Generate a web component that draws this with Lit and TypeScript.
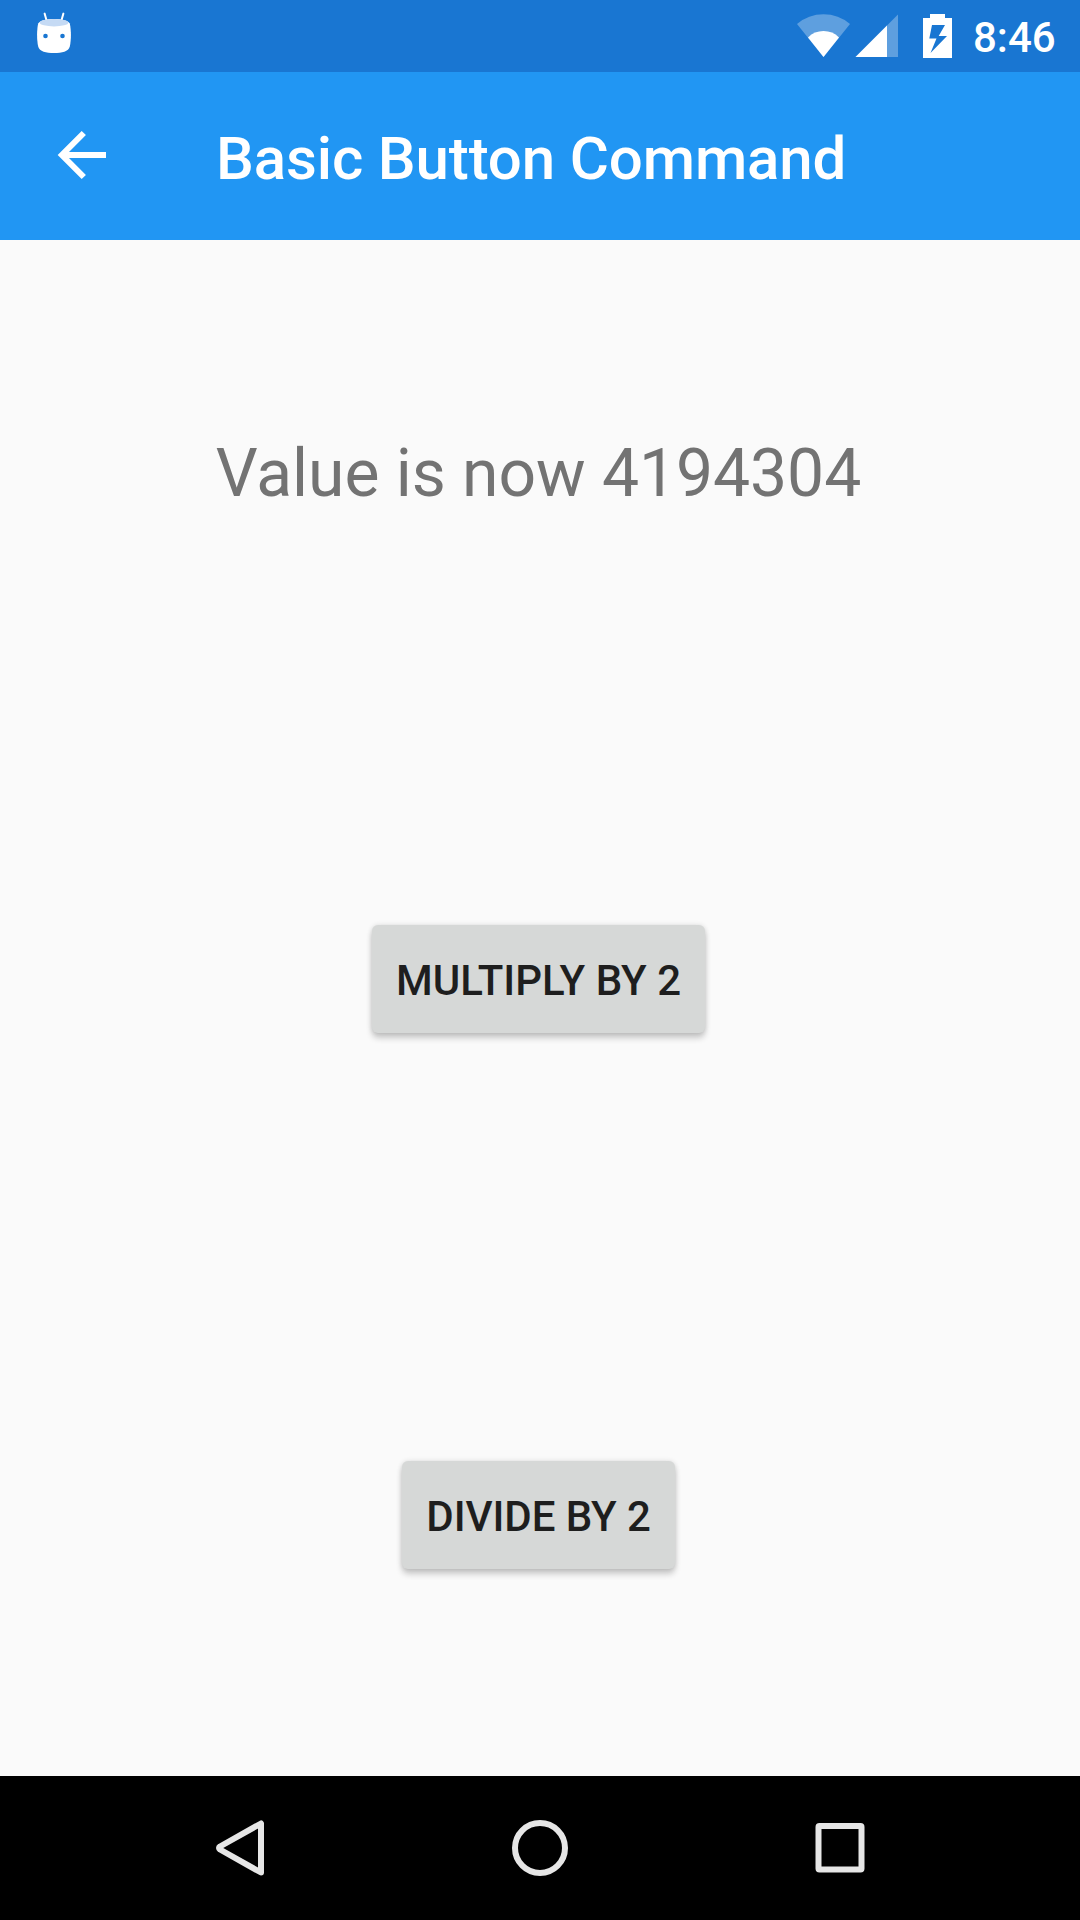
import { LitElement, html, css } from "lit";
import { customElement, state } from "lit/decorators.js";

@customElement("status-bar")
class StatusBar extends LitElement {
  static styles = css`
    :host {
      display: flex;
      align-items: flex-start;
      justify-content: space-between;
      height: 72px;
      background: #1976d2;
      color: #fff;
    }
    .group {
      display: flex;
      height: 72px;
    }
    svg {
      display: block;
      flex: none;
    }
    .clock {
      width: 107px;
      font: 500 42px/50px Roboto, sans-serif;
      padding-top: 13px;
      box-sizing: border-box;
      white-space: nowrap;
    }
  `;

  render() {
    return html`
      <svg width="90" height="72" viewBox="0 0 90 72">
        <path d="M44.6 13.6L47 22M63.4 13.6L61 22" stroke="#fff" stroke-width="2" stroke-linecap="round" />
        <path
          d="M38.2 23.5C40 20.5 46 19 54 19s14 1.500 15.800 4.500C71.300 30 71.300 40 69.800 46.500C68.500 51.500 62 53 54 53s-14.500-1.500-15.800-6.500C36.700 40 36.700 30 38.200 23.500z"
          fill="#fff"
        />
        <ellipse cx="54" cy="22.700" rx="14.300" ry="3.700" fill="#c5daf4" />
        <circle cx="45.500" cy="36" r="2.300" fill="#1976d2" />
        <circle cx="62.500" cy="36" r="2.300" fill="#1976d2" />
      </svg>
      <div class="group">
        <svg width="193" height="72" viewBox="780 0 193 72">
          <path d="M823.500 57L797 24Q808.500 14.300 823.500 14.300T850 24z" fill="#fff" fill-opacity=".3" />
          <path d="M823.500 57L808 37.400Q814.500 31 823.500 31T839 37.400z" fill="#fff" />
          <path d="M898 14.500V57H855.500z" fill="#fff" fill-opacity=".3" />
          <path d="M887 25.500V57H855.500z" fill="#fff" />
          <path
            fill-rule="evenodd"
            d="M930 14H945V18H952V58H923V18H930zM932 25L929.300 38.500H936.500L930.500 53L947 36H938.700L945 25z"
            fill="#fff"
          />
        </svg>
        <div class="clock">8:46</div>
      </div>
    `;
  }
}

@customElement("title-bar")
class TitleBar extends LitElement {
  static styles = css`
    :host {
      display: flex;
      height: 168px;
      background: #2196f3;
      color: #fff;
    }
    svg {
      display: block;
      flex: none;
    }
    .title {
      margin: 0;
      padding: 52px 0 0;
      font: 500 60px/70px Roboto, sans-serif;
      letter-spacing: -0.13px;
      white-space: nowrap;
    }
  `;

  render() {
    return html`
      <svg width="216" height="168" viewBox="0 72 216 168">
        <path d="M106 155H64M83.800 133L61.900 155L83.800 177" fill="none" stroke="#fff" stroke-width="6" />
      </svg>
      <h1 class="title">Basic Button Command</h1>
    `;
  }
}

@customElement("nav-bar")
class NavBar extends LitElement {
  static styles = css`
    :host {
      display: flex;
      align-items: center;
      justify-content: center;
      gap: 228px;
      height: 144px;
      background: #000;
    }
    svg {
      display: block;
      fill: none;
      stroke: #e6e6e6;
      stroke-width: 6;
    }
  `;

  render() {
    return html`
      <svg width="72" height="72" viewBox="0 0 72 72">
        <path d="M57 11.500V60.500L16 37.500Q14 36 16 34.500z" stroke-linejoin="round" />
      </svg>
      <svg width="72" height="72" viewBox="0 0 72 72"><circle cx="36" cy="36" r="25" /></svg>
      <svg width="72" height="72" viewBox="0 0 72 72">
        <rect x="14.500" y="14" width="43" height="43.500" rx="1" />
      </svg>
    `;
  }
}

@customElement("app-root")
class AppRoot extends LitElement {
  static styles = css`
    :host {
      display: flex;
      flex-direction: column;
      width: 1080px;
      height: 1920px;
      overflow: hidden;
      background: #fafafa;
    }
    .page {
      flex: 1;
      display: flex;
      flex-direction: column;
      align-items: center;
      padding: 195px 3px 0 0;
      box-sizing: border-box;
    }
    .value {
      height: 78px;
      font: 400 66px/78px Roboto, sans-serif;
      letter-spacing: -0.05px;
      color: #737373;
      white-space: nowrap;
    }
    .btn {
      height: 108px;
      margin: 412px 0 0;
      padding: 4px 24px 0;
      box-sizing: border-box;
      border: 0;
      border-radius: 6px;
      background: #d6d8d7;
      color: #1e1e1e;
      font: 500 42px/50px Roboto, sans-serif;
      text-transform: uppercase;
      white-space: nowrap;
      box-shadow: 0 5px 6px rgba(0, 0, 0, 0.2), 0 0 5px rgba(0, 0, 0, 0.12);
    }
    .btn + .btn {
      margin-top: 428px;
      letter-spacing: -0.08px;
    }
  `;

  @state() private value = 4194304;

  render() {
    return html`
      <status-bar></status-bar>
      <title-bar></title-bar>
      <main class="page">
        <div class="value">Value is now ${this.value}</div>
        <button class="btn" @click=${() => (this.value *= 2)}>Multiply by 2</button>
        <button class="btn" @click=${() => (this.value /= 2)}>Divide by 2</button>
      </main>
      <nav-bar></nav-bar>
    `;
  }
}
